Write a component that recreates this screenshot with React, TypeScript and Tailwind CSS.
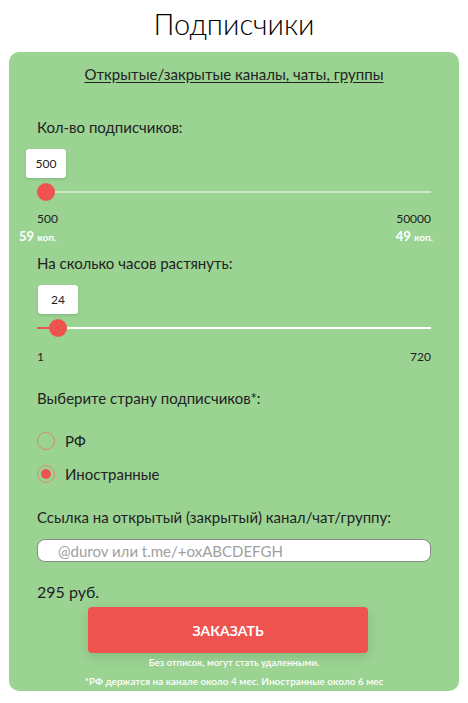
import { useState } from "react";

const font = { fontFamily: "Lato, 'Open Sans', sans-serif" };

type SliderProps = {
  value: number;
  min: number;
  max: number;
  thick?: boolean;
};

function Slider({ value, min, max, thick }: SliderProps) {
  // thumb sits at the start of the track for the minimum value
  const pct = (value - min) / (max - min);
  const left = `calc(${pct * 100}% + ${9 - pct * 18}px)`;
  return (
    <div className="relative h-[54px]">
      <div
        className="absolute top-0 flex h-[29px] w-10 -translate-x-1/2 items-center justify-center rounded-[3px] bg-white text-[12px] text-[#222] shadow-[0_1px_3px_rgba(0,0,0,0.15)]"
        style={{ left }}
      >
        {value}
      </div>
      <div
        className={`absolute left-0 right-0 top-[43px] -translate-y-1/2 bg-white ${thick ? "h-[2px]" : "h-px"}`}
      />
      <div
        className={`absolute left-0 top-[43px] -translate-y-1/2 bg-[#ef5350] ${thick ? "h-[2px]" : "h-px"}`}
        style={{ width: left }}
      />
      <div
        className="absolute top-[43px] h-[18px] w-[18px] -translate-x-1/2 -translate-y-1/2 rounded-full bg-[#ef5350]"
        style={{ left }}
      />
    </div>
  );
}

function Radio({ label, checked, onClick }: { label: string; checked: boolean; onClick: () => void }) {
  return (
    <button type="button" onClick={onClick} className="flex h-6 items-center gap-[10px] text-left">
      <span className="flex h-[18px] w-[18px] items-center justify-center rounded-full border border-[#d98a70]">
        {checked && <span className="h-[10px] w-[10px] rounded-full bg-[#ef5350]" />}
      </span>
      <span className="text-[15px] text-[#222]">{label}</span>
    </button>
  );
}

export default function App() {
  const [country, setCountry] = useState<"ru" | "foreign">("foreign");

  return (
    <div className="min-h-screen bg-white" style={font}>
      <h1 className="flex h-[52px] items-center justify-center pb-1 text-[29px] font-light text-black">
        Подписчики
      </h1>

      <div className="mx-[9px] rounded-[10px] bg-[#9bd393] px-7 pb-1 pt-[11px]">
        <p className="text-center text-[15px] leading-[22px] text-[#222] underline underline-offset-2">
          Открытые/закрытые каналы, чаты, группы
        </p>

        <p className="mt-[31px] text-[15px] leading-[22px] text-[#222]">Кол-во подписчиков:</p>
        <div className="mt-[11px]">
          <Slider value={500} min={500} max={50000} />
        </div>
        <div className="mt-2 flex justify-between text-[12px] leading-4 text-[#222]">
          <span>500</span>
          <span>50000</span>
        </div>
        <div className="-mx-[18px] mt-[2px] flex justify-between pr-[16px] text-[13px] font-bold leading-[14px] text-white">
          <span>
            59 <span className="text-[10px]">коп.</span>
          </span>
          <span>
            49 <span className="text-[10px]">коп.</span>
          </span>
        </div>

        <p className="mt-2 text-[15px] leading-[22px] text-[#222]">На сколько часов растянуть:</p>
        <div className="mt-[11px]">
          <Slider value={24} min={1} max={720} thick />
        </div>
        <div className="mt-[10px] flex justify-between text-[12px] leading-4 text-[#222]">
          <span>1</span>
          <span>720</span>
        </div>

        <p className="mt-[22px] text-[15px] leading-[22px] text-[#222]">Выберите страну подписчиков*:</p>
        <div className="mt-5 flex flex-col gap-[9px]">
          <Radio label="РФ" checked={country === "ru"} onClick={() => setCountry("ru")} />
          <Radio label="Иностранные" checked={country === "foreign"} onClick={() => setCountry("foreign")} />
        </div>

        <p className="mt-5 text-[15px] leading-[22px] text-[#222]">
          Ссылка на открытый (закрытый) канал/чат/группу:
        </p>
        <input
          className="mt-[11px] block h-[23px] w-full rounded-lg border border-[#8a8a8a] bg-white pl-5 text-[15px] text-[#222] outline-none placeholder:text-[#a0a0a0]"
          placeholder="@durov или t.me/+oxABCDEFGH"
        />

        <p className="mt-[19px] text-[16px] leading-[22px] text-[#222]">295 руб.</p>
        <button
          type="button"
          className="ml-[51px] mt-1 flex h-[46px] w-[280px] items-center justify-center rounded-[4px] bg-[#ef5350] text-[14px] font-bold text-white shadow-[0_4px_12px_rgba(0,0,0,0.12)]"
        >
          ЗАКАЗАТЬ
        </button>
        <p className="mt-1 text-center text-[9.5px] font-semibold leading-3 text-white">
          Без отписок, могут стать удаленными.
        </p>
        <p className="mt-[6px] text-center text-[10px] font-semibold leading-3 text-white">
          *РФ держатся на канале около 4 мес. Иностранные около 6 мес
        </p>
      </div>
    </div>
  );
}
